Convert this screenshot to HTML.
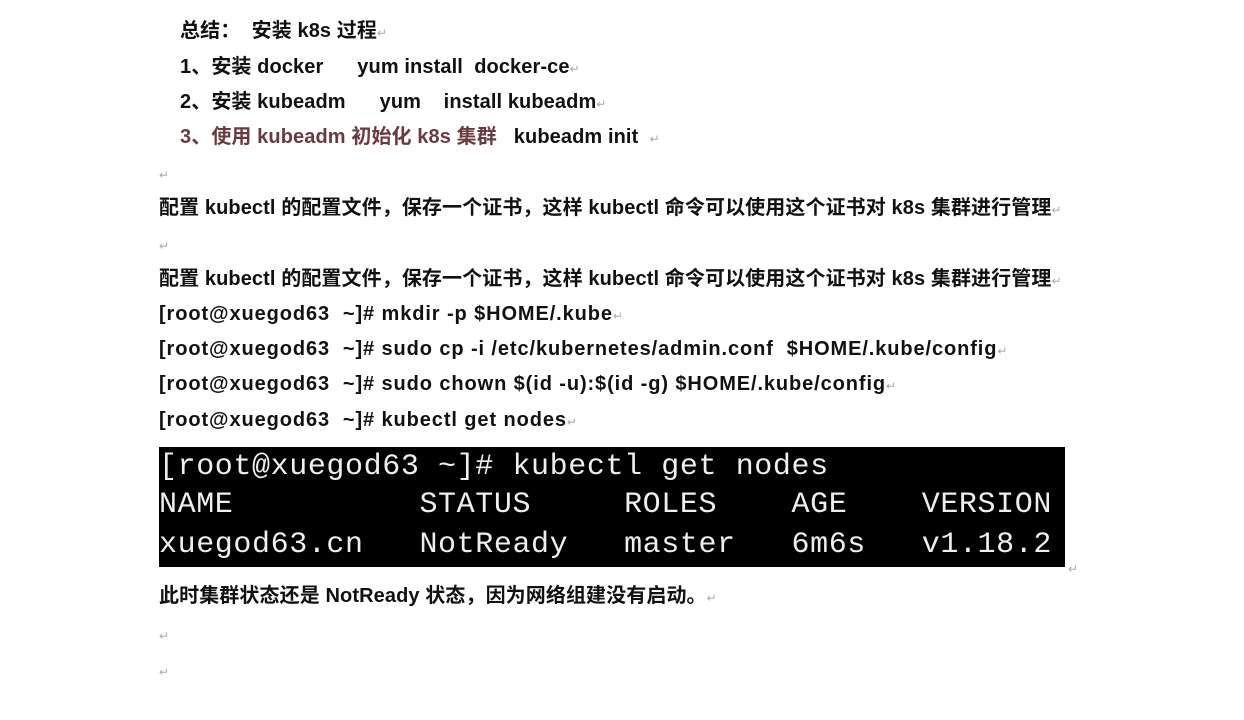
<!DOCTYPE html>
<html><head><meta charset="utf-8"><style>
body{margin:0;width:1244px;height:720px;background:#fff;overflow:hidden;position:relative;font-family:"Liberation Sans","Noto Sans CJK SC",sans-serif;}
.l{position:absolute;white-space:pre;font-size:20px;font-weight:bold;color:#111;line-height:24px;letter-spacing:0.1px;}
.c{letter-spacing:0.9px}
.r{color:#6b3a3e}
.m{color:#aaa;font-weight:normal;font-size:12px}
.t{position:absolute;left:159px;top:447px;width:906px;height:120px;background:#000;overflow:hidden;}
.t div{position:absolute;left:0;white-space:pre;color:#eee;font-family:"Liberation Mono","DejaVu Sans Mono",monospace;font-size:30px;line-height:36px;letter-spacing:0.6px;}
</style></head><body>
<div class="l" style="left:180px;top:19px">总结：  安装 k8s 过程<span class="m">↵</span></div>
<div class="l" style="left:180px;top:55px">1、安装 docker      yum install  docker-ce<span class="m">↵</span></div>
<div class="l" style="left:180px;top:90px">2、安装 kubeadm      yum    install kubeadm<span class="m">↵</span></div>
<div class="l" style="left:180px;top:125px"><span class="r">3、使用 kubeadm 初始化 k8s 集群</span>   kubeadm init  <span class="m">↵</span></div>
<div class="l" style="left:159px;top:161px"><span class="m">↵</span></div>
<div class="l" style="left:159px;top:196px">配置 kubectl 的配置文件，保存一个证书，这样 kubectl 命令可以使用这个证书对 k8s 集群进行管理<span class="m">↵</span></div>
<div class="l" style="left:159px;top:232px"><span class="m">↵</span></div>
<div class="l" style="left:159px;top:267px">配置 kubectl 的配置文件，保存一个证书，这样 kubectl 命令可以使用这个证书对 k8s 集群进行管理<span class="m">↵</span></div>
<div class="l c" style="left:159px;top:302px">[root@xuegod63  ~]# mkdir -p $HOME/.kube<span class="m">↵</span></div>
<div class="l c" style="left:159px;top:337px">[root@xuegod63  ~]# sudo cp -i /etc/kubernetes/admin.conf  $HOME/.kube/config<span class="m">↵</span></div>
<div class="l c" style="left:159px;top:372px">[root@xuegod63  ~]# sudo chown $(id -u):$(id -g) $HOME/.kube/config<span class="m">↵</span></div>
<div class="l c" style="left:159px;top:408px">[root@xuegod63  ~]# kubectl get nodes<span class="m">↵</span></div>
<div class="t">
<div style="top:2px">[root@xuegod63 ~]# kubectl get nodes</div>
<div style="top:40px">NAME          STATUS     ROLES    AGE    VERSION</div>
<div style="top:80px">xuegod63.cn   NotReady   master   6m6s   v1.18.2</div>
</div>
<div class="l" style="left:1068px;top:555px"><span class="m">↵</span></div>
<div class="l" style="left:159px;top:584px">此时集群状态还是 NotReady 状态，因为网络组建没有启动。<span class="m">↵</span></div>
<div class="l" style="left:159px;top:622px"><span class="m">↵</span></div>
<div class="l" style="left:159px;top:658px"><span class="m">↵</span></div>
</body></html>
